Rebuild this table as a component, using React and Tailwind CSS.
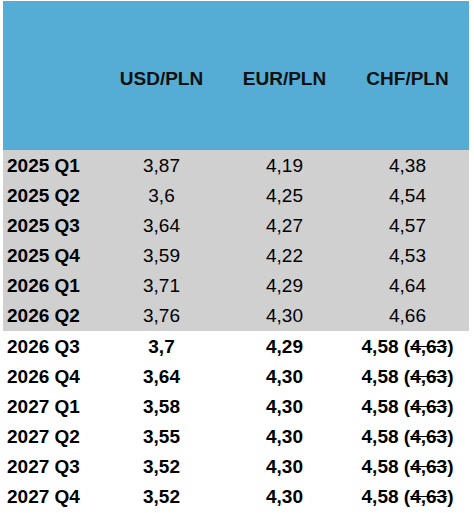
import React from 'react';

const past = [
  ['2025 Q1', '3,87', '4,19', '4,38'],
  ['2025 Q2', '3,6', '4,25', '4,54'],
  ['2025 Q3', '3,64', '4,27', '4,57'],
  ['2025 Q4', '3,59', '4,22', '4,53'],
  ['2026 Q1', '3,71', '4,29', '4,64'],
  ['2026 Q2', '3,76', '4,30', '4,66'],
];

const forecast = [
  ['2026 Q3', '3,7', '4,29'],
  ['2026 Q4', '3,64', '4,30'],
  ['2027 Q1', '3,58', '4,30'],
  ['2027 Q2', '3,55', '4,30'],
  ['2027 Q3', '3,52', '4,30'],
  ['2027 Q4', '3,52', '4,30'],
];

const cols = 'grid grid-cols-[97px_123px_123px_123px]';

export default function App() {
  return (
    <div className="w-[474px] h-[513px] bg-white pt-px pl-[3px] text-black font-['Liberation_Sans',Arial,sans-serif] text-[19px] leading-none">
      <div className="w-[466px]">
        {/* header */}
        <div className={`${cols} h-[149px] bg-[#55acd4] items-center font-bold text-[19px] text-[#111]`}>
          <div />
          <div className="text-center pt-[5px]">USD/PLN</div>
          <div className="text-center pt-[5px]">EUR/PLN</div>
          <div className="text-center pt-[5px]">CHF/PLN</div>
        </div>

        {/* actual values */}
        <div className="bg-[#d0d0d0] py-[0.5px]">
          {past.map((r) => (
            <div key={r[0]} className={`${cols} h-[30px] items-center`}>
              <div className="pl-1 font-bold">{r[0]}</div>
              <div className="text-center">{r[1]}</div>
              <div className="text-center">{r[2]}</div>
              <div className="text-center">{r[3]}</div>
            </div>
          ))}
        </div>

        {/* forecast */}
        {forecast.map((r) => (
          <div key={r[0]} className={`${cols} h-[30px] items-center font-bold`}>
            <div className="pl-1">{r[0]}</div>
            <div className="text-center">{r[1]}</div>
            <div className="text-center">{r[2]}</div>
            <div className="text-center">
              4,58 (<span className="line-through">4,63</span>)
            </div>
          </div>
        ))}
      </div>
    </div>
  );
}
